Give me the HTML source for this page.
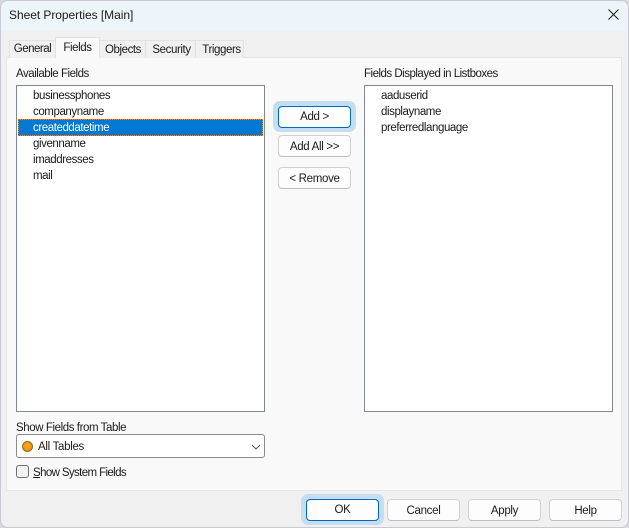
<!DOCTYPE html>
<html><head><meta charset="utf-8">
<style>
html,body{margin:0;padding:0;width:629px;height:528px;overflow:hidden;background:#d8d8dc}
*{box-sizing:border-box}
#w{position:absolute;left:0;top:0;width:629px;height:528px;background:#f0f0f0;border:1px solid #c9c9d6;border-radius:8px;overflow:hidden}
.a{position:absolute}
.t{position:absolute;font:11.5px/15px "Liberation Sans",sans-serif;letter-spacing:-.42px;color:#1a1a1a;white-space:nowrap}
.tab{position:absolute;background:#f0f0f0;border:1px solid #e2e2e2;border-bottom:none;font:11.5px/18px "Liberation Sans",sans-serif;letter-spacing:-.42px;text-align:center;color:#1a1a1a}
.list{position:absolute;background:#fff;border:1px solid #828790}
.btn{position:absolute;width:73px;height:22px;background:#fdfdfd;border:1px solid #d0d0d0;border-bottom-color:#bdbdbd;border-radius:4px;font:11.5px/22px "Liberation Sans",sans-serif;letter-spacing:-.32px;text-align:center;color:#1a1a1a}
.def{border:1.5px solid #0067c0;line-height:21px}
.halo{position:absolute;width:83px;height:31px;background:#c5ddf0;border-radius:7px}
</style></head><body>
<div id="w">
<div class="a" style="left:0;top:0;width:629px;height:30px;background:#eef5f9"></div>
<div class="t" style="left:8px;top:7px;font-size:12px;letter-spacing:-.05px">Sheet Properties [Main]</div>
<svg class="a" style="left:607px;top:8px" width="11" height="11" viewBox="0 0 11 11"><path d="M.5.5 10.5 10.5M10.5.5.5 10.5" stroke="#222" stroke-width="1.1" fill="none"/></svg>

<div class="a" style="left:5px;top:56px;width:616px;height:434px;background:#f9f9f9;border:1px solid #e5e5e5"></div>
<div class="tab" style="left:8px;top:39px;width:47px;height:18px;line-height:17px;letter-spacing:-.5px">General</div>
<div class="tab" style="left:54px;top:36px;width:45px;height:21px;background:#f9f9f9;z-index:2;line-height:20px">Fields</div>
<div class="tab" style="left:98px;top:39px;width:47px;height:18px;padding-left:1px">Objects</div>
<div class="tab" style="left:144px;top:39px;width:51px;height:18px;padding-left:2px">Security</div>
<div class="tab" style="left:194px;top:39px;width:49px;height:18px;padding-left:4px">Triggers</div>

<div class="t" style="left:15px;top:66px;letter-spacing:-.47px">Available Fields</div>
<div class="list" style="left:15px;top:84px;width:249px;height:327px"></div>
<div class="a" style="left:17px;top:118px;width:245px;height:17px;background:#0078d4;border:1px dotted #f08a1d"></div>
<div class="t" style="left:32px;top:88px">businessphones</div>
<div class="t" style="left:32px;top:104px">companyname</div>
<div class="t" style="left:32px;top:120px;color:#fff">createddatetime</div>
<div class="t" style="left:32px;top:136px">givenname</div>
<div class="t" style="left:32px;top:152px">imaddresses</div>
<div class="t" style="left:32px;top:168px">mail</div>

<div class="halo" style="left:272px;top:100px"></div>
<div class="btn def" style="left:277px;top:105px">Add &gt;</div>
<div class="btn" style="left:277px;top:134px">Add All &gt;&gt;</div>
<div class="btn" style="left:277px;top:166px">&lt; Remove</div>

<div class="t" style="left:363px;top:66px;letter-spacing:-.5px">Fields Displayed in Listboxes</div>
<div class="list" style="left:363px;top:84px;width:249px;height:327px"></div>
<div class="t" style="left:380px;top:88px">aaduserid</div>
<div class="t" style="left:380px;top:104px">displayname</div>
<div class="t" style="left:380px;top:120px">preferredlanguage</div>

<div class="t" style="left:15px;top:420px">Show Fields from Table</div>
<div class="a" style="left:15px;top:433px;width:249px;height:24px;background:#fff;border:1px solid #8a8a8a;border-radius:3px"></div>
<div class="a" style="left:21px;top:440px;width:11px;height:11px;border-radius:50%;background:radial-gradient(circle at 50% 40%,#ffa81c,#e98b00);border:1px solid #8a6a30"></div>
<div class="t" style="left:37px;top:439px;letter-spacing:-.3px">All Tables</div>
<svg class="a" style="left:250px;top:443px" width="10" height="7" viewBox="0 0 10 7"><path d="M1 1 5 5 9 1" stroke="#555" stroke-width="1" fill="none"/></svg>
<div class="a" style="left:15px;top:464px;width:13px;height:13px;background:#f2f2f2;border:1px solid #6f6f6f;border-radius:3px"></div>
<div class="t" style="left:32px;top:465px;letter-spacing:-.62px"><u>S</u>how System Fields</div>

<div class="halo" style="left:300px;top:493px"></div>
<div class="btn def" style="left:305px;top:498px">OK</div>
<div class="btn" style="left:386px;top:498px">Cancel</div>
<div class="btn" style="left:467px;top:498px">Apply</div>
<div class="btn" style="left:548px;top:498px">Help</div>
</div>
</body></html>
